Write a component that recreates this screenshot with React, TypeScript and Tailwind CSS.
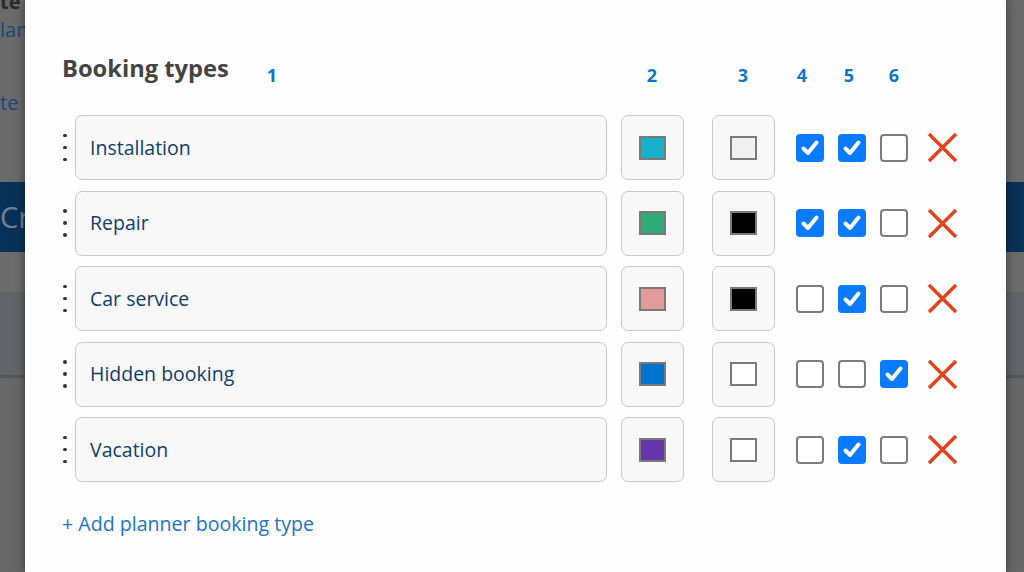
import React from 'react'

interface BookingType {
  name: string
  color: string
  textColor: string
  flags: [boolean, boolean, boolean]
}

const types: BookingType[] = [
  { name: 'Installation', color: '#16b0c9', textColor: '#f1f0f0', flags: [true, true, false] },
  { name: 'Repair', color: '#2eab77', textColor: '#000000', flags: [true, true, false] },
  { name: 'Car service', color: '#e09b9a', textColor: '#000000', flags: [false, true, false] },
  { name: 'Hidden booking', color: '#0073ce', textColor: '#ffffff', flags: [false, false, true] },
  { name: 'Vacation', color: '#6634ab', textColor: '#ffffff', flags: [false, true, false] },
]

function Checkbox({ checked }: { checked: boolean }) {
  if (checked) {
    return (
      <div className="flex h-[28px] w-[28px] items-center justify-center rounded-[4px] bg-[#0a7bff]">
        <svg width="28" height="28" viewBox="0 0 28 28" fill="none">
          <path d="M7.5 14.5 L12 19 L20.5 8.5" stroke="white" strokeWidth="4" strokeLinecap="round" strokeLinejoin="round" />
        </svg>
      </div>
    )
  }
  return <div className="h-[28px] w-[28px] rounded-[4px] border-2 border-[#7c7c7c] bg-white" />
}

function RemoveIcon() {
  return (
    <svg width="31" height="31" viewBox="0 0 31 31" fill="none">
      <path d="M2 2 L29 29 M29 2 L2 29" stroke="#e5421c" strokeWidth="3.4" />
    </svg>
  )
}

function DragHandle() {
  return (
    <div className="flex w-[13px] flex-col items-start gap-[8.5px] pl-[1px]">
      <span className="h-[3.5px] w-[3.5px] rounded-full bg-[#333]" />
      <span className="h-[3.5px] w-[3.5px] rounded-full bg-[#333]" />
      <span className="h-[3.5px] w-[3.5px] rounded-full bg-[#333]" />
    </div>
  )
}

function Swatch({ color }: { color: string }) {
  return (
    <div className="flex h-[65px] w-[63px] items-center justify-center rounded-[7px] border border-[#c9c9c9] bg-[#f8f8f8]">
      <span className="h-[24px] w-[27px] border-2 border-[#7a7a7a]" style={{ backgroundColor: color }} />
    </div>
  )
}

export default function App() {
  return (
    <div className="relative h-[572px] w-[1024px] overflow-hidden bg-[#6a6a6a] font-['Open_Sans',sans-serif]">
      {/* dimmed page behind the modal */}
      <div className="flex h-full flex-col">
        <div className="h-[182px] leading-none">
          <p className="-mt-[8px] text-[20px] font-bold text-[#2a2a2a]">te</p>
          <p className="mt-[8px] text-[20px] text-[#1b4778]">lan</p>
          <p className="mt-[53px] text-[20px] text-[#1b4778]">te</p>
        </div>
        <div className="flex h-[70px] items-center bg-[#093157]">
          <span className="text-[29px] text-[#6f8297]">Cr</span>
        </div>
        <div className="h-[40px] bg-[#6c6c6c]" />
        <div className="h-[86px] border-b-[3px] border-[#575757] bg-[#61656a]" />
        <div className="flex-1 bg-[#676767]" />
      </div>

      {/* modal */}
      <div className="absolute top-0 left-[25px] h-full w-[981px] bg-[#fefefe] pt-[50px] pl-[37px] shadow-[0_0_10px_rgba(0,0,0,0.45)]">
        <div className="flex h-[40px] items-center">
          <h2 className="-mt-[2px] w-[204px] text-[23.7px] font-bold text-[#444]">Booking types</h2>
          <div className="flex pt-[10px] text-[18px] font-bold text-[#0b77c7]">
            <span className="w-[12px] text-center">1</span>
            <span className="ml-[368px] w-[12px] text-center">2</span>
            <span className="ml-[79px] w-[12px] text-center">3</span>
            <span className="ml-[47px] w-[12px] text-center">4</span>
            <span className="ml-[35px] w-[12px] text-center">5</span>
            <span className="ml-[33px] w-[12px] text-center">6</span>
          </div>
        </div>

        <div className="mt-[25px] flex flex-col gap-[10.5px]">
          {types.map(t => (
            <div key={t.name} className="flex h-[65px] items-center">
              <DragHandle />
              <div className="flex h-[65px] w-[532px] items-center rounded-[7px] border border-[#c9c9c9] bg-[#f8f8f8] pl-[14px] text-[19.5px] text-[#0f3e6d]">
                {t.name}
              </div>
              <div className="ml-[14px]">
                <Swatch color={t.color} />
              </div>
              <div className="ml-[28px]">
                <Swatch color={t.textColor} />
              </div>
              <div className="ml-[21px] flex gap-[14px]">
                {t.flags.map((f, i) => (
                  <Checkbox key={i} checked={f} />
                ))}
              </div>
              <div className="ml-[19px]">
                <RemoveIcon />
              </div>
            </div>
          ))}
        </div>

        <button className="mt-[27px] text-[19.6px] text-[#1a74c9]">+ Add planner booking type</button>
      </div>
    </div>
  )
}
